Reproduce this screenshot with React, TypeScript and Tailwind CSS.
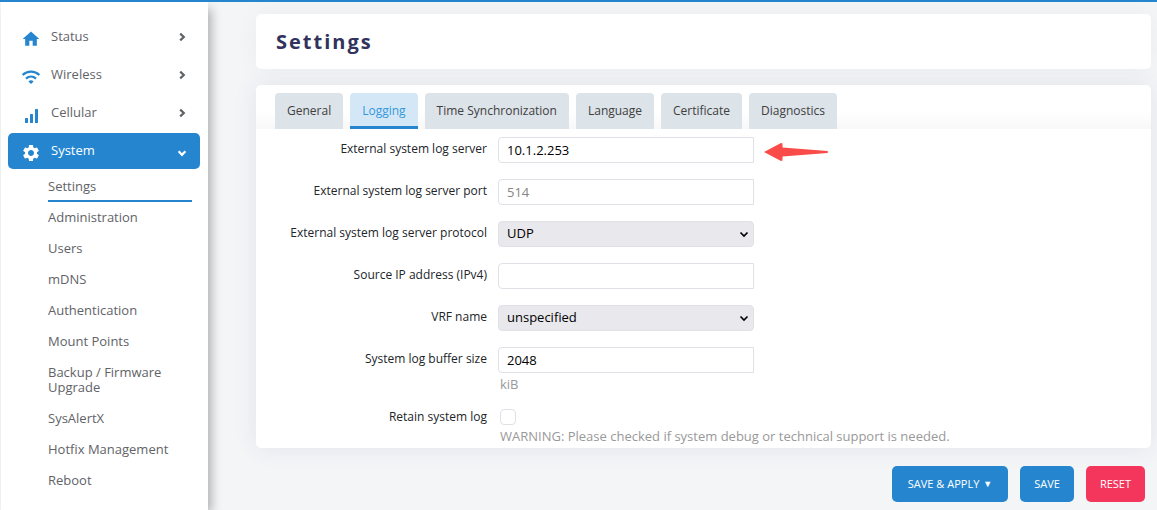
import { useState } from 'react';
import type { ReactNode } from 'react';
import { MdHome, MdSettings } from 'react-icons/md';

const sections = [
  { label: 'Status', icon: <MdHome size={20} /> },
  { label: 'Wireless', icon: <WifiIcon /> },
  { label: 'Cellular', icon: <SignalIcon /> },
  { label: 'System', icon: <MdSettings size={20} /> },
];

const systemPages = [
  'Settings',
  'Administration',
  'Users',
  'mDNS',
  'Authentication',
  'Mount Points',
  'Backup / Firmware Upgrade',
  'SysAlertX',
  'Hotfix Management',
  'Reboot',
];

const tabs = ['General', 'Logging', 'Time Synchronization', 'Language', 'Certificate', 'Diagnostics'];

const inputClass =
  'h-[26px] w-64 rounded-l-[4px] border border-[#dee2e6] bg-white px-2 text-[13px] text-black outline-none placeholder:text-[#868686]';

function WifiIcon() {
  return (
    <svg width="20" height="20" viewBox="0 0 20 20" fill="none" stroke="currentColor" strokeWidth="2.3">
      <path d="M1.6 8C6.4 3.4 13.6 3.4 18.4 8" />
      <path d="M5 11.6C7.9 9 12.1 9 15 11.6" />
      <path d="M7.4 14.4Q10 12 12.6 14.4L10 17Z" fill="currentColor" stroke="none" />
    </svg>
  );
}

function SignalIcon() {
  return (
    <svg width="20" height="20" viewBox="0 0 20 20" fill="currentColor">
      <rect x="4" y="13" width="3" height="5" rx="0.5" />
      <rect x="9" y="9" width="3" height="9" rx="0.5" />
      <rect x="14" y="4" width="3" height="14" rx="0.5" />
    </svg>
  );
}

function Chevron({ open }: { open: boolean }) {
  return (
    <svg
      width="10"
      height="10"
      viewBox="0 0 10 10"
      fill="none"
      stroke="currentColor"
      strokeWidth="2.2"
      className={open ? 'mt-1 rotate-90' : ''}
    >
      <path d="M3.2 1.6 6.8 5 3.2 8.4" />
    </svg>
  );
}

type RowProps = { id: string; label: string; hint?: string; compact?: boolean; children: ReactNode };

function Row({ id, label, hint, compact, children }: RowProps) {
  return (
    <div className="flex gap-[11px]">
      <label
        htmlFor={id}
        className={`w-[231px] shrink-0 text-right text-[12px] leading-4 text-[#212529] ${compact ? '' : 'pt-1'}`}
      >
        {label}
      </label>
      <div className="min-w-0 flex-1">
        {children}
        {hint && <p className="mt-[2px] pl-[2px] text-[13px] leading-[18px] text-[#999]">{hint}</p>}
      </div>
    </div>
  );
}

function Select({ id, options }: { id: string; options: string[] }) {
  return (
    <div className="relative w-64">
      <select
        id={id}
        className="block h-[26px] w-full appearance-none rounded-[4px] border border-[#dee2e6] bg-[#e9e8ed] px-2 text-[13px] text-black outline-none"
      >
        {options.map((o) => (
          <option key={o}>{o}</option>
        ))}
      </select>
      <svg
        width="10"
        height="10"
        viewBox="0 0 10 10"
        fill="none"
        stroke="black"
        strokeWidth="1.7"
        className="pointer-events-none absolute top-2 right-[5px]"
      >
        <path d="M1.5 3.5 5 7 8.5 3.5" />
      </svg>
    </div>
  );
}

function Sidebar() {
  return (
    <nav className="ml-px w-[207px] shrink-0 bg-white pt-[17px] pr-2 pl-[7px] text-[13px] text-[#5f6368] shadow-[5px_5px_10px_-2px_rgba(0,0,0,0.3)]">
      <ul className="flex flex-col gap-[2px]">
        {sections.map(({ label, icon }) => {
          const open = label === 'System';
          return (
            <li key={label}>
              <a
                href="#"
                className={`flex h-9 items-center rounded-[5px] px-[13px] ${open ? 'bg-[#2586cf] text-white' : ''}`}
              >
                <span className={`pt-1 ${open ? 'text-white' : 'text-[#2586cf]'}`}>{icon}</span>
                <span className="ml-[10px] flex-1">{label}</span>
                <Chevron open={open} />
              </a>
            </li>
          );
        })}
      </ul>
      <ul className="mt-[2px] pr-2 pl-10">
        {systemPages.map((page) => (
          <li key={page}>
            <a
              href="#"
              className={`block pt-2 leading-[15px] ${page === 'Settings' ? 'border-b-2 border-[#2586cf] pb-[6px]' : 'pb-2'}`}
            >
              {page}
            </a>
          </li>
        ))}
      </ul>
    </nav>
  );
}

export default function App() {
  const [tab, setTab] = useState('Logging');

  return (
    <div className="flex min-h-screen flex-col border-t-2 border-[#2586cf] bg-[#f4f5f7] font-['Open_Sans',sans-serif]">
      <div className="flex flex-1 overflow-hidden">
        <Sidebar />
        <main className="min-w-0 flex-1 pt-3 pr-[6px] pb-2 pl-12">
          <header className="rounded-[5px] bg-white px-5 py-[13px] shadow-[0_0_24px_rgba(0,0,0,0.04)]">
            <h1 className="text-[20px] leading-[29px] font-bold tracking-[2px] text-[#32325d]">Settings</h1>
          </header>

          <section className="mt-4 rounded-[5px] bg-white pt-2 pb-[3px] shadow-[0_0_24px_rgba(50,60,120,0.09)]">
            <div role="tablist" className="flex gap-[7px] bg-linear-to-b from-white from-50% to-[#f8f8f9] pl-[19px]">
              {tabs.map((t) => (
                <button
                  key={t}
                  type="button"
                  role="tab"
                  aria-selected={t === tab}
                  onClick={() => setTab(t)}
                  className={`h-9 rounded-t-[4px] px-3 text-[12px] ${
                    t === tab ? 'border-b-[3px] border-[#2586cf] bg-[#d4e7f6] pt-[3px] text-[#3498db]' : 'bg-[#dce3e9] text-[#404040]'
                  }`}
                >
                  {t}
                </button>
              ))}
            </div>

            <form className="flex flex-col gap-4 pt-2">
              <Row id="log-server" label="External system log server">
                <div className="flex items-center gap-[10px]">
                  <input id="log-server" className={inputClass} defaultValue="10.1.2.253" />
                  <svg width="64" height="18" viewBox="0 0 64 18" fill="#f94b48" className="mt-1">
                    <path d="M0 9 17 0 18.5 .5V4.5L63.5 8 64 9 63.5 10 18.5 13.5V17.5L17 18Z" />
                  </svg>
                </div>
              </Row>
              <Row id="log-port" label="External system log server port">
                <input id="log-port" className={inputClass} placeholder="514" />
              </Row>
              <Row id="log-proto" label="External system log server protocol">
                <Select id="log-proto" options={['UDP', 'TCP']} />
              </Row>
              <Row id="source-ip" label="Source IP address (IPv4)">
                <input id="source-ip" className={inputClass} />
              </Row>
              <Row id="vrf" label="VRF name">
                <Select id="vrf" options={['unspecified']} />
              </Row>
              <Row id="buffer" label="System log buffer size" hint="kiB">
                <input id="buffer" className={`block ${inputClass}`} defaultValue="2048" />
              </Row>
              <Row
                id="retain"
                label="Retain system log"
                hint="WARNING: Please checked if system debug or technical support is needed."
                compact
              >
                <input
                  id="retain"
                  type="checkbox"
                  className="ml-[2px] block size-4 appearance-none rounded-[4px] border border-[#dee2e6] bg-white checked:bg-[#2586cf]"
                />
              </Row>
            </form>
          </section>

          <div className="mt-[18px] flex justify-end gap-3 pr-[6px] text-[11px] text-white">
            <button type="button" className="flex h-9 items-center gap-1 rounded-[5px] bg-[#2586cf] px-4">
              SAVE &amp; APPLY <span className="text-[9px]">▼</span>
            </button>
            <button type="button" className="h-9 rounded-[5px] bg-[#2586cf] px-[14px]">
              SAVE
            </button>
            <button type="button" className="h-9 rounded-[5px] bg-[#f5365c] px-[14px]">
              RESET
            </button>
          </div>
        </main>
      </div>
    </div>
  );
}
